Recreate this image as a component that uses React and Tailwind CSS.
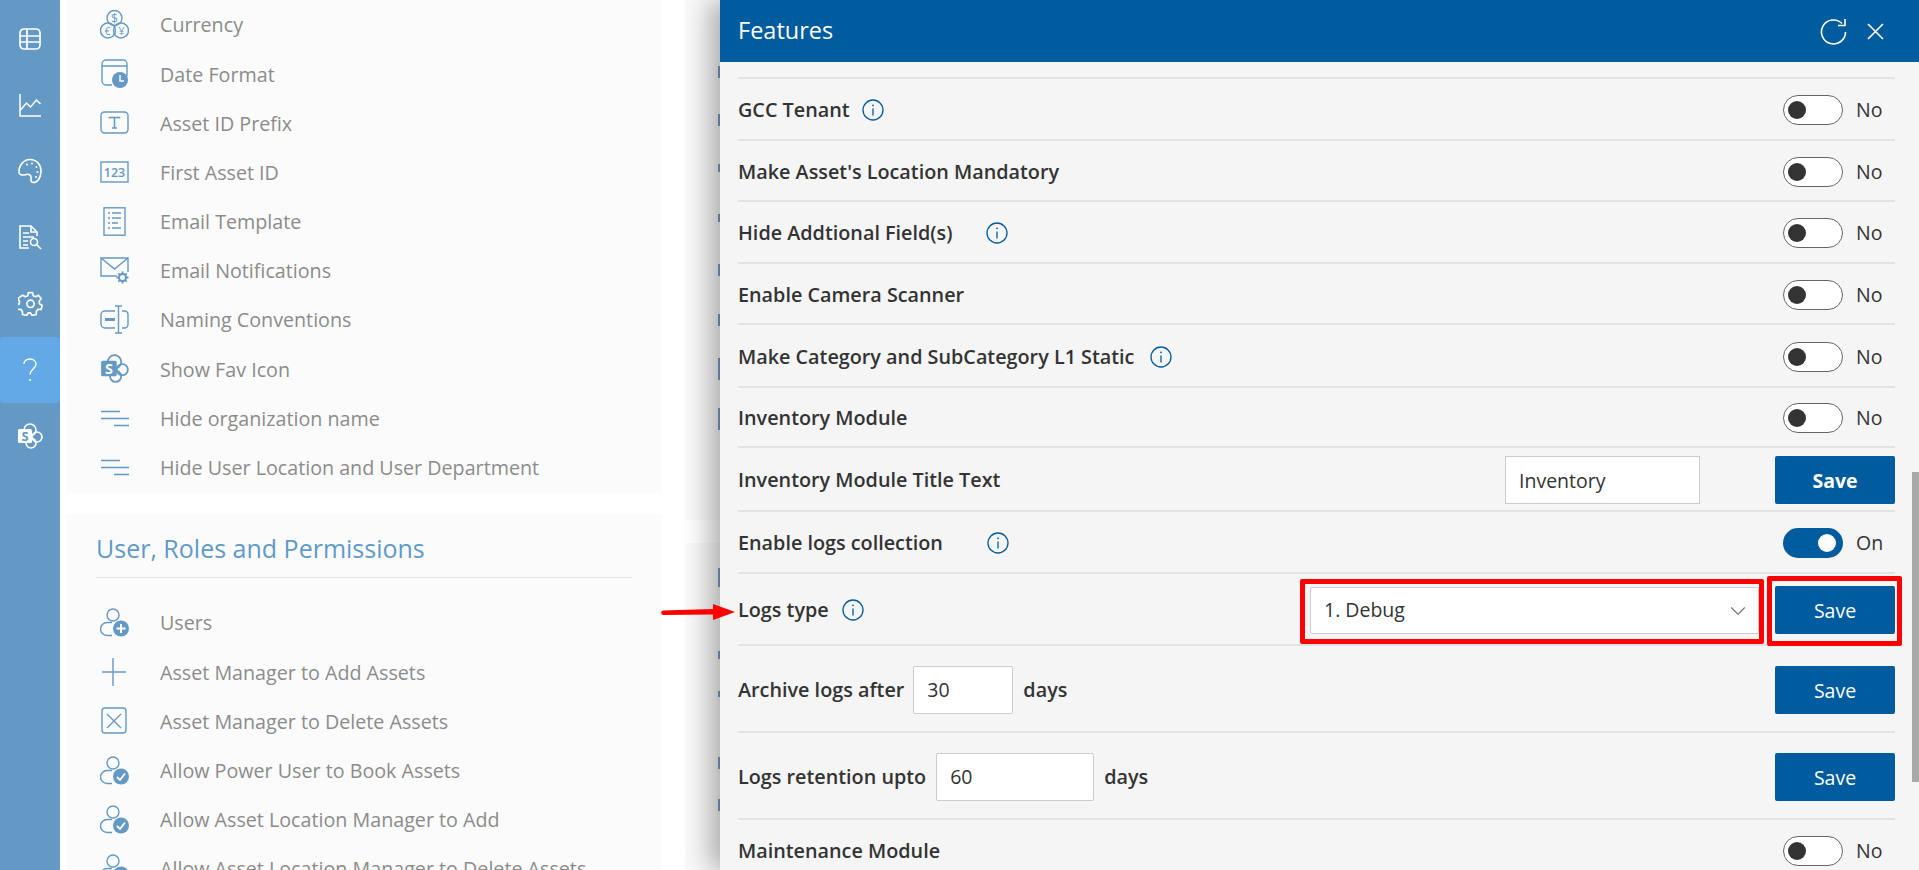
import { ChevronDown } from "lucide-react"

const font = { fontFamily: '"Open Sans", "Noto Sans", sans-serif' }

// --- sidebar icons ---
const SideTable = () => (
  <svg width="24" height="24" viewBox="0 0 24 24" fill="none" stroke="white" strokeWidth="1.7">
    <rect x="2" y="2" width="20" height="20" rx="4" />
    <path d="M2 9h20M2 15h20M9 2v20" />
  </svg>
)
const SideChart = () => (
  <svg width="24" height="24" viewBox="0 0 24 24" fill="none" stroke="white" strokeWidth="1.5">
    <path d="M2 1v22h21" />
    <path d="M2.500 17l6-7 4 4 6-7 4 4" />
  </svg>
)
const SidePalette = () => (
  <svg width="26" height="26" viewBox="0 0 26 26" fill="none" stroke="white" strokeWidth="1.6">
    <path d="M13 1.500c6.500 0 11 5 11 11.500s-3.500 11.500-7.500 11.500c-3 0-2.500-3-2.500-5 0-3-2.500-3.500-4.500-3-2.500.6-7 1.500-7.500-2C1.500 8 6.500 1.500 13 1.500z" />
    <circle cx="10" cy="6.500" r="1" fill="white" stroke="none" />
    <circle cx="15" cy="5.500" r="1" fill="white" stroke="none" />
    <circle cx="19.500" cy="9" r="1" fill="white" stroke="none" />
    <circle cx="20.500" cy="14" r="1" fill="white" stroke="none" />
    <circle cx="19" cy="19" r="1" fill="white" stroke="none" />
  </svg>
)
const SideDoc = () => (
  <svg width="24" height="25" viewBox="0 0 24 25" fill="none" stroke="white" strokeWidth="1.6">
    <path d="M19 11V7l-6-6H2v22h9" />
    <path d="M13 1v6h6" />
    <path d="M5 8h6M5 12h11M5 16h5M5 20h5" />
    <circle cx="16" cy="17" r="3.500" />
    <path d="M18.500 19.500l4.500 4.500" />
  </svg>
)
const SideGear = () => (
  <svg width="25" height="25" viewBox="0 0 24 24" fill="none" stroke="white" strokeWidth="1.6" strokeLinejoin="round">
    <path d="M10 1.500h4l.7 3 2.200 1 2.700-1.500 2.700 3.500-2 2.300.3 2.500 2.600 1.500-1 4-3-.2-1.600 2-.1 3-4 .9-1.500-2.500h-2.200l-1.500 2.500-4-.9-.1-3-1.600-2-3 .2-1-4 2.600-1.500.3-2.500-2-2.300L4.400 4l2.700 1.500 2.200-1z" />
    <circle cx="12" cy="12.300" r="3.500" />
  </svg>
)
const SideHelp = () => (
  <svg width="16" height="24" viewBox="0 0 16 24" fill="none" stroke="white" strokeWidth="1.4">
    <path d="M2 6c0-3 2.500-5 6-5s6 2.200 6 5.200c0 4.800-6 5-6 10.300" />
    <circle cx="8" cy="22" r="1" fill="white" stroke="none" />
  </svg>
)
const SharePoint = ({ color = "white", knock = "#6499c6", size = 26 }) => (
  <svg width={size} height={size} viewBox="0 0 26 26" fill="none" stroke={color} strokeWidth="1.6">
    <circle cx="13" cy="7" r="6" />
    <circle cx="20" cy="14" r="5" />
    <circle cx="14" cy="20" r="5" />
    <rect x="1" y="6" width="14" height="14" rx="1.500" fill={color} stroke="none" />
    <text x="8" y="17.500" textAnchor="middle" fontSize="13" fontWeight="700" fill={knock} stroke="none" style={font}>S</text>
  </svg>
)

// --- settings list icons ---
const c = "#6499c6"
const Svg = ({ children }) => (
  <svg width="29" height="29" viewBox="0 0 29 29" fill="none" stroke={c} strokeWidth="1.4">{children}</svg>
)
const IcCurrency = () => (
  <Svg>
    <circle cx="14.500" cy="8" r="7.500" />
    <circle cx="8" cy="20.500" r="7.500" />
    <circle cx="21" cy="20.500" r="7.500" />
    <text x="14.500" y="12.500" textAnchor="middle" fontSize="12" fill={c} stroke="none" style={font}>$</text>
    <text x="7.500" y="24.500" textAnchor="middle" fontSize="10.500" fill={c} stroke="none" style={font}>€</text>
    <text x="21.500" y="24.500" textAnchor="middle" fontSize="10.500" fill={c} stroke="none" style={font}>¥</text>
  </Svg>
)
const IcDate = () => (
  <Svg>
    <path d="M12 26H6a4 4 0 0 1-4-4V5a4 4 0 0 1 4-4h17a4 4 0 0 1 4 4v12M2 7h25" />
    <circle cx="20" cy="21" r="8" fill={c} stroke="none" />
    <path d="M20 16v6h4" stroke="white" />
  </Svg>
)
const IcPrefix = () => (
  <Svg>
    <rect x="1" y="4" width="27" height="21" rx="3.500" />
    <path d="M9.500 10.500v-1h10v1M14.500 9.500v10.500M12 20h5" strokeWidth="1.600" />
  </Svg>
)
const Ic123 = () => (
  <Svg>
    <rect x="1" y="4" width="27" height="20" />
    <text x="14.500" y="19" textAnchor="middle" fontSize="12.500" fontWeight="600" fill={c} stroke="none" style={font}>123</text>
  </Svg>
)
const IcTemplate = () => (
  <Svg>
    <rect x="4" y="0.800" width="21" height="27.400" />
    <path d="M8 6h2M12 6h9M8 11h2M12 11h9M8 16h2M12 16h6M8 21h2M12 21h9" />
  </Svg>
)
const IcMailGear = () => (
  <Svg>
    <path d="M17 20H1V2h27v14M1 2l13.500 11L28 2" />
    <circle cx="22.500" cy="21.500" r="3.500" strokeWidth="2" />
    <path d="M22.500 15.500v2.500M22.500 25v2.500M16.500 21.500H19M26 21.500h2.500M18.300 17.300l1.700 1.700M25 24l1.700 1.700M18.300 25.700l1.700-1.700M25 19l1.700-1.700" strokeWidth="1.800" />
  </Svg>
)
const IcNaming = () => (
  <Svg>
    <path d="M15 6H5a4 4 0 0 0-4 4v9a4 4 0 0 0 4 4h10M22 6h2.500a3.500 3.500 0 0 1 3.500 3.500v10a3.500 3.500 0 0 1-3.500 3.500H22" />
    <path d="M18.500 1v27M15 1h7M15 28h7" />
    <path d="M5 14.500h10" strokeWidth="3" />
  </Svg>
)
const IcLines = () => (
  <Svg>
    <path d="M1 7.500h19M1 14.500h28M14 21.500h15" />
  </Svg>
)
const IcUserBadge = ({ mark }) => (
  <Svg>
    <circle cx="13" cy="7" r="6" />
    <path d="M12 27.500H7a6.500 6.500 0 0 1 0-13h5" />
    <circle cx="21" cy="20.500" r="8" fill={c} stroke="none" />
    {mark === "plus" ? (
      <path d="M21 16v9M16.500 20.500h9" stroke="white" strokeWidth="2" />
    ) : (
      <path d="M17 21l3 3 5-6.500" stroke="white" strokeWidth="1.800" />
    )}
  </Svg>
)
const IcPlus = () => (
  <Svg>
    <path d="M13 1v28M2 15h24" />
  </Svg>
)
const IcBoxX = () => (
  <Svg>
    <rect x="2" y="2" width="24" height="25" rx="3" />
    <path d="M7 8l14 14M21 8L7 22" />
  </Svg>
)

const Info = ({ className = "" }) => (
  <svg className={className} width="22" height="22" viewBox="0 0 22 22" fill="none" stroke="#005b9f" strokeWidth="1.300">
    <circle cx="11" cy="11" r="10" />
    <path d="M11 9.500v7" />
    <circle cx="11" cy="6.300" r="0.900" fill="#005b9f" stroke="none" />
  </svg>
)

function Toggle({ on }) {
  return (
    <div className="flex items-center w-[112px] shrink-0">
      {on ? (
        <div className="w-[60px] h-[30px] rounded-full bg-[#005b9f] flex items-center justify-end pr-[7px]">
          <div className="w-[18px] h-[18px] rounded-full bg-white" />
        </div>
      ) : (
        <div className="w-[60px] h-[30px] rounded-full bg-white border border-[#666] flex items-center pl-[4px]">
          <div className="w-[18px] h-[18px] rounded-full bg-[#333]" />
        </div>
      )}
      <span className="ml-[13px] text-[19.5px] text-[#333]">{on ? "On" : "No"}</span>
    </div>
  )
}

const SaveBtn = ({ bold }) => (
  <button className={`w-[120px] h-[48px] pt-[2px] rounded-[2px] bg-[#005b9f] text-white text-[19.5px] shrink-0 ${bold ? "font-bold" : "font-normal"}`}>
    Save
  </button>
)

function Row({ h, children, border = true }) {
  return (
    <div className={`flex items-center shrink-0 ${h} ${border ? "border-b-2 border-[#e2e2e2] pt-[2px]" : ""}`}>
      {children}
    </div>
  )
}

const Label = ({ children }) => (
  <span className="text-[19.8px] font-semibold text-[#333] whitespace-nowrap">{children}</span>
)

const generalItems = [
  [IcCurrency, "Currency"],
  [IcDate, "Date Format"],
  [IcPrefix, "Asset ID Prefix"],
  [Ic123, "First Asset ID"],
  [IcTemplate, "Email Template"],
  [IcMailGear, "Email Notifications"],
  [IcNaming, "Naming Conventions"],
  [() => <SharePoint color={c} knock="#fbfbfb" size={29} />, "Show Fav Icon"],
  [IcLines, "Hide organization name"],
  [IcLines, "Hide User Location and User Department"],
]

const userItems = [
  [() => <IcUserBadge mark="plus" />, "Users"],
  [IcPlus, "Asset Manager to Add Assets"],
  [IcBoxX, "Asset Manager to Delete Assets"],
  [() => <IcUserBadge mark="check" />, "Allow Power User to Book Assets"],
  [() => <IcUserBadge mark="check" />, "Allow Asset Location Manager to Add"],
  [() => <IcUserBadge mark="check" />, "Allow Asset Location Manager to Delete Assets"],
]

function ListRow({ icon: Icon, text }) {
  return (
    <div className="flex items-center h-[49.2px] pl-[34px] shrink-0">
      <div className="w-[29px] h-[29px] shrink-0"><Icon /></div>
      <span className="ml-[31px] pt-[1px] text-[19.7px] text-[#8b8b8b] whitespace-nowrap">{text}</span>
    </div>
  )
}

const sideIcons = [SideTable, SideChart, SidePalette, SideDoc, SideGear, SideHelp, SharePoint]

export default function App() {
  return (
    <div className="relative h-screen overflow-hidden flex bg-white" style={font}>
      {/* sidebar */}
      <div className="w-[60px] shrink-0 bg-[#6499c6] pt-[5.500px]">
        {sideIcons.map((Icon, i) => (
          <div key={i} className={`h-[66.300px] flex items-center justify-center ${i === 5 ? "bg-[#62a9e6] rounded-[3px]" : ""}`}>
            <Icon />
          </div>
        ))}
      </div>

      {/* settings cards */}
      <div className="w-[596px] ml-[6px] shrink-0 flex flex-col">
        <div className="h-[493px] bg-[#fbfbfb] flex flex-col shrink-0">
          {generalItems.map(([icon, text]) => (
            <ListRow key={text} icon={icon} text={text} />
          ))}
        </div>
        <div className="mt-[21px] bg-[#fbfbfb] flex-1 flex flex-col overflow-hidden">
          <div className="mx-[30px] h-[64px] shrink-0 border-b border-[#e4e4e4] flex items-center pt-[6px]">
            <h2 className="text-[25px] text-[#5f9ac9] whitespace-nowrap">User, Roles and Permissions</h2>
          </div>
          <div className="h-[20px] shrink-0" />
          {userItems.map(([icon, text]) => (
            <ListRow key={text} icon={icon} text={text} />
          ))}
        </div>
      </div>

      {/* next column, mostly under the panel: only the icon edges show */}
      <div className="ml-[23px] flex-1 flex flex-col">
        <div className="h-[520px] bg-[#fafafa] shrink-0 pl-[33px] pt-[66px]">
          <div className="w-[3px] h-[12px] bg-[#7a9fc2]" />
          <div className="w-[3px] h-[12px] mt-[36px] bg-[#7a9fc2]" />
          <div className="w-[3px] h-[8px] mt-[38px] bg-[#7a9fc2]" />
          <div className="w-[3px] h-[8px] mt-[42px] bg-[#7a9fc2]" />
          <div className="w-[3px] h-[12px] mt-[42px] bg-[#7a9fc2]" />
          <div className="w-[3px] h-[12px] mt-[38px] bg-[#7a9fc2]" />
          <div className="w-[3px] h-[22px] mt-[32px] bg-[#7a9fc2]" />
          <div className="w-[3px] h-[22px] mt-[28px] bg-[#7a9fc2]" />
        </div>
        <div className="mt-[23px] flex-1 bg-[#fafafa] pl-[33px] pt-[25px]">
          <div className="w-[3px] h-[19px] bg-[#7a9fc2]" />
          <div className="w-[3px] h-[8px] mt-[64px] bg-[#7a9fc2]" />
          <div className="w-[3px] h-[6px] mt-[32px] bg-[#7a9fc2]" />
          <div className="w-[3px] h-[12px] mt-[60px] bg-[#7a9fc2]" />
          <div className="w-[3px] h-[12px] mt-[30px] bg-[#7a9fc2]" />
        </div>
      </div>

      {/* features panel */}
      <div className="absolute top-0 right-0 bottom-0 w-[1199px] bg-[#f5f5f5] shadow-[-10px_0_26px_rgba(0,0,0,0.32)] flex flex-col">
        <div className="h-[62px] shrink-0 bg-[#005b9f] flex items-center pl-[18px] pr-[35px] text-white">
          <span className="text-[23.500px]">Features</span>
          <div className="ml-auto flex items-center gap-[20px]">
            <svg width="27" height="27" viewBox="0 0 27 27" fill="none" stroke="white" strokeWidth="1.600">
              <path d="M22 5.500A12 12 0 1 0 25.500 14" />
              <path d="M25 1v6.500h-7" />
            </svg>
            <svg width="17" height="17" viewBox="0 0 17 17" fill="none" stroke="white" strokeWidth="1.600">
              <path d="M1 1l15 15M16 1L1 16" />
            </svg>
          </div>
        </div>

        <div className="flex-1 flex flex-col pl-[18px] pr-[24px] overflow-hidden">
          <div className="h-[17px] shrink-0 border-b-2 border-[#e2e2e2]" />
          <Row h="h-[62px]">
            <Label>GCC Tenant</Label>
            <Info className="ml-[12px]" />
            <div className="ml-auto"><Toggle /></div>
          </Row>
          <Row h="h-[61px]">
            <Label>Make Asset's Location Mandatory</Label>
            <div className="ml-auto"><Toggle /></div>
          </Row>
          <Row h="h-[62px]">
            <Label>Hide Addtional Field(s)</Label>
            <Info className="ml-[33px]" />
            <div className="ml-auto"><Toggle /></div>
          </Row>
          <Row h="h-[61px]">
            <Label>Enable Camera Scanner</Label>
            <div className="ml-auto"><Toggle /></div>
          </Row>
          <Row h="h-[63px]">
            <Label>Make Category and SubCategory L1 Static</Label>
            <Info className="ml-[16px]" />
            <div className="ml-auto"><Toggle /></div>
          </Row>
          <Row h="h-[60px]">
            <Label>Inventory Module</Label>
            <div className="ml-auto"><Toggle /></div>
          </Row>
          <Row h="h-[64px]">
            <Label>Inventory Module Title Text</Label>
            <div className="ml-auto w-[195px] h-[48px] pt-[1px] bg-white border border-[#ccc] flex items-center pl-[13px] text-[19.500px] text-[#333]">Inventory</div>
            <div className="ml-[75px]"><SaveBtn bold /></div>
          </Row>
          <Row h="h-[62px]">
            <Label>Enable logs collection</Label>
            <Info className="ml-[44px]" />
            <div className="ml-auto"><Toggle on /></div>
          </Row>
          <Row h="h-[72px]">
            <Label>Logs type</Label>
            <Info className="ml-[13px]" />
            <div className="relative ml-auto w-[449px] h-[47px] bg-white border border-[#ccc] rounded-[2px] flex items-center pl-[13px] text-[19.500px] text-[#333]">
              1. Debug
              <ChevronDown className="absolute right-[7px] top-[10px] text-[#777]" size={26} strokeWidth={1} />
              <div className="absolute -left-[11px] -top-[9px] -right-[6px] -bottom-[11px] border-[5px] border-[#ff0000] rounded-[2px]" />
            </div>
            <div className="relative ml-[16px]">
              <SaveBtn />
              <div className="absolute -left-[8px] -top-[10px] -right-[7px] -bottom-[12px] border-[5px] border-[#ff0000] rounded-[2px]" />
            </div>
          </Row>
          <Row h="h-[87px]">
            <Label>Archive logs after</Label>
            <div className="ml-[9px] w-[100px] h-[48px] bg-white border border-[#ccc] rounded-[2px] flex items-center pl-[13px] text-[19.500px] text-[#333]">30</div>
            <div className="ml-[10px]"><Label>days</Label></div>
            <div className="ml-auto"><SaveBtn /></div>
          </Row>
          <Row h="h-[87px]">
            <Label>Logs retention upto</Label>
            <div className="ml-[10px] w-[158px] h-[48px] bg-white border border-[#ccc] rounded-[2px] flex items-center pl-[13px] text-[19.500px] text-[#333]">60</div>
            <div className="ml-[10px]"><Label>days</Label></div>
            <div className="ml-auto"><SaveBtn /></div>
          </Row>
          <Row h="h-[62px]" border={false}>
            <Label>Maintenance Module</Label>
            <div className="ml-auto"><Toggle /></div>
          </Row>
        </div>

        {/* scrollbar */}
        <div className="absolute right-0 top-[472px] w-[7px] h-[310px] bg-[#a9a9a9]" />
      </div>

      {/* annotation arrow */}
      <svg className="absolute left-[661px] top-[600px]" width="76" height="24" viewBox="0 0 76 24" fill="#ff0000">
        <path d="M2 10.500l50-1.500v-5L74 12 52 20v-5.500L2 15a2.300 2.300 0 0 1 0-4.500z" />
      </svg>
    </div>
  )
}
